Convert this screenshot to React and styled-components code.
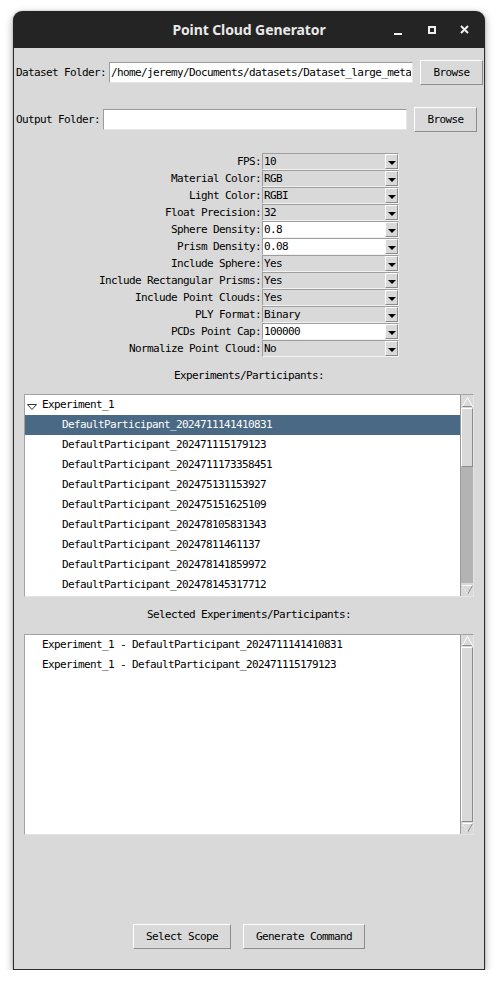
import React from "react";
import styled, { createGlobalStyle } from "styled-components";

const MONO = `"DejaVu Sans Mono", "Liberation Mono", monospace`;

const GlobalStyle = createGlobalStyle`
  html, body { margin: 0; padding: 0; background: #ffffff; }
  body { font-family: ${MONO}; }
  * { box-sizing: border-box; }
`;

const Window = styled.div`
  margin: 11px 0 0 13px;
  width: 472px;
  display: flex;
  flex-direction: column;
  border-radius: 9px 9px 0 0;
  overflow: hidden;
  box-shadow: 0 3px 9px rgba(0, 0, 0, 0.35), 0 0 2px rgba(0, 0, 0, 0.25);
`;

const TitleBar = styled.div`
  height: 37px;
  background: #242424;
  display: grid;
  grid-template-columns: 1fr auto 1fr;
  align-items: center;
`;

const Title = styled.div`
  grid-column: 2;
  font-family: "Noto Sans", "Open Sans", sans-serif;
  font-weight: 700;
  font-size: 14px;
  color: #e9e9e9;
  letter-spacing: -0.1px;
`;

const Controls = styled.div`
  grid-column: 3;
  justify-self: end;
  display: flex;
  padding-right: 4px;
`;

const Control = styled.div`
  width: 33px;
  height: 37px;
  display: flex;
  align-items: center;
  justify-content: center;
  color: #f0f0f0;
`;

const Content = styled.div`
  height: 922px;
  background: #d9d9d9;
  border: 1px solid #2c2c2c;
  border-top: none;
  display: flex;
  flex-direction: column;
  font-family: ${MONO};
  font-size: 11px;
  letter-spacing: -0.62px;
  color: #000;
`;

const FolderRow = styled.div`
  display: flex;
  align-items: center;
  height: 25px;
  padding-left: 2px;
  margin-top: ${(p) => p.$top}px;
`;

const Label = styled.span`
  white-space: nowrap;
`;

const Entry = styled.input`
  margin-left: 3px;
  width: 304px;
  height: 21px;
  padding: 0 1px;
  background: #ffffff;
  border: 1px solid;
  border-color: #9c9c9c #e6e6e6 #e6e6e6 #9c9c9c;
  font: inherit;
  letter-spacing: inherit;
  color: #000;
  outline: none;
`;

const TkButton = styled.button`
  height: 25px;
  width: ${(p) => p.$w}px;
  margin-left: ${(p) => p.$ml || 0}px;
  padding: 0;
  background: #d9d9d9;
  border: 1px solid;
  border-color: #ffffff #8c8c8c #8c8c8c #ffffff;
  font: inherit;
  letter-spacing: inherit;
  color: #000;
  cursor: default;
`;

const ComboGrid = styled.div`
  margin-top: 21px;
  display: grid;
  grid-template-columns: auto 137px;
  grid-auto-rows: 17px;
  justify-content: center;
  align-items: center;
`;

const ComboLabel = styled.span`
  text-align: right;
  white-space: nowrap;
  padding-right: 1px;
`;

const Combo = styled.div`
  height: 17px;
  display: flex;
  border: 1px solid;
  border-color: #9e9e9e #f2f2f2 #f2f2f2 #9e9e9e;
  background: ${(p) => (p.$editable ? "#ffffff" : "#d9d9d9")};
`;

const ComboText = styled.span`
  flex: 1;
  padding-left: 1px;
  line-height: 15px;
  white-space: nowrap;
`;

const ComboArrow = styled.div`
  width: 13px;
  height: 15px;
  background: #d9d9d9;
  border: 1px solid;
  border-color: #ffffff #8c8c8c #8c8c8c #ffffff;
  display: flex;
  align-items: flex-end;
  justify-content: center;
  padding-bottom: 2px;
`;

const SectionLabel = styled.div`
  height: 20px;
  line-height: 20px;
  text-align: center;
  margin-top: ${(p) => p.$top}px;
`;

const ListFrame = styled.div`
  margin: ${(p) => p.$top}px 10px 0 10px;
  height: ${(p) => p.$h}px;
  background: #ffffff;
  border: 1px solid;
  border-color: #a2a2a2 #e4e4e4 #e4e4e4 #a2a2a2;
  display: flex;
`;

const Rows = styled.div`
  flex: 1;
  display: flex;
  flex-direction: column;
  overflow: hidden;
`;

const Row = styled.div`
  height: 20px;
  line-height: 20px;
  flex: none;
  display: flex;
  align-items: center;
  padding-left: ${(p) => p.$indent}px;
  white-space: nowrap;
  background: ${(p) => (p.$selected ? "#4a6984" : "transparent")};
  color: ${(p) => (p.$selected ? "#ffffff" : "#000000")};
`;

const Toggle = styled.span`
  width: 15px;
  margin-left: -15px;
  display: inline-flex;
  align-items: center;
  padding-top: 4px;
`;

const Scrollbar = styled.div`
  width: 13px;
  display: flex;
  flex-direction: column;
  background: #b3b3b3;
  border-left: 1px solid #9a9a9a;
`;

const ScrollArrow = styled.div`
  height: ${(p) => p.$h}px;
  flex: none;
  background: #d9d9d9;
  display: flex;
  align-items: center;
  justify-content: center;
`;

const Thumb = styled.div`
  flex: ${(p) => (p.$fill ? "1" : "none")};
  height: ${(p) => (p.$fill ? "auto" : `${p.$h}px`)};
  background: #d9d9d9;
  border: 1px solid;
  border-color: #ffffff #8c8c8c #8c8c8c #ffffff;
`;

const Trough = styled.div`
  flex: 1;
`;

const ButtonBar = styled.div`
  margin-top: auto;
  padding-bottom: 20px;
  display: flex;
  justify-content: center;
  gap: 12px;
`;

const DownTri = () => (
  <svg width="8" height="5" viewBox="0 0 8 5">
    <path d="M0 0 H8 L4 4 Z" fill="#000" />
    <rect x="0" y="4" width="8" height="1" fill="#000" opacity="0" />
  </svg>
);

const TreeToggle = () => (
  <svg width="10" height="6" viewBox="0 0 10 6">
    <path d="M0.5 0.5 H9.5 L5 5.5 Z" fill="none" stroke="#333" strokeWidth="1" />
  </svg>
);

const ArrowUp = () => (
  <svg width="11" height="10" viewBox="0 0 11 10">
    <path d="M5.5 0.5 L10.5 9.5 H0.5 Z" fill="#d9d9d9" stroke="#ffffff" strokeWidth="1" />
    <path d="M5.5 0.5 L10.5 9.5 H0.5" fill="none" stroke="#8c8c8c" strokeWidth="1" strokeDasharray="0 11 30" />
  </svg>
);

const ArrowDown = () => (
  <svg width="11" height="10" viewBox="0 0 11 10">
    <path d="M0.5 0.5 H10.5 L5.5 9.5 Z" fill="#d9d9d9" stroke="#8c8c8c" strokeWidth="1" />
    <path d="M0.5 0.5 H10.5 M0.5 0.5 L5.5 9.5" fill="none" stroke="#ffffff" strokeWidth="1" />
  </svg>
);

const combos = [
  ["FPS:", "10", false],
  ["Material Color:", "RGB", false],
  ["Light Color:", "RGBI", false],
  ["Float Precision:", "32", false],
  ["Sphere Density:", "0.8", true],
  ["Prism Density:", "0.08", true],
  ["Include Sphere:", "Yes", false],
  ["Include Rectangular Prisms:", "Yes", false],
  ["Include Point Clouds:", "Yes", false],
  ["PLY Format:", "Binary", false],
  ["PCDs Point Cap:", "100000", true],
  ["Normalize Point Cloud:", "No", false],
];

const participants = [
  "DefaultParticipant_2024711141410831",
  "DefaultParticipant_202471115179123",
  "DefaultParticipant_2024711173358451",
  "DefaultParticipant_202475131153927",
  "DefaultParticipant_202475151625109",
  "DefaultParticipant_202478105831343",
  "DefaultParticipant_20247811461137",
  "DefaultParticipant_202478141859972",
  "DefaultParticipant_202478145317712",
];

const selected = [
  "Experiment_1 - DefaultParticipant_2024711141410831",
  "Experiment_1 - DefaultParticipant_202471115179123",
];

export default function App() {
  return (
    <>
      <GlobalStyle />
      <Window>
        <TitleBar>
          <Title>Point Cloud Generator</Title>
          <Controls>
            <Control>
              <svg width="9" height="12" viewBox="0 0 9 12">
                <rect x="0" y="9" width="8" height="2" fill="currentColor" />
              </svg>
            </Control>
            <Control>
              <svg width="8" height="8" viewBox="0 0 8 8">
                <rect x="1" y="1" width="6" height="6" fill="none" stroke="currentColor" strokeWidth="2" />
              </svg>
            </Control>
            <Control>
              <svg width="9" height="9" viewBox="0 0 9 9">
                <path d="M1 1 L8 8 M8 1 L1 8" stroke="currentColor" strokeWidth="2" />
              </svg>
            </Control>
          </Controls>
        </TitleBar>
        <Content>
          <FolderRow $top={12}>
            <Label>Dataset Folder:</Label>
            <Entry readOnly defaultValue="/home/jeremy/Documents/datasets/Dataset_large_metadata" />
            <TkButton $w={63} $ml={7}>Browse</TkButton>
          </FolderRow>
          <FolderRow $top={22}>
            <Label>Output Folder:</Label>
            <Entry readOnly defaultValue="" />
            <TkButton $w={63} $ml={7}>Browse</TkButton>
          </FolderRow>

          <ComboGrid>
            {combos.map(([label, value, editable]) => (
              <React.Fragment key={label}>
                <ComboLabel>{label}</ComboLabel>
                <Combo $editable={editable}>
                  <ComboText>{value}</ComboText>
                  <ComboArrow>
                    <DownTri />
                  </ComboArrow>
                </Combo>
              </React.Fragment>
            ))}
          </ComboGrid>

          <SectionLabel $top={9}>Experiments/Participants:</SectionLabel>
          <ListFrame $top={8} $h={203}>
            <Rows>
              <Row $indent={17}>
                <Toggle>
                  <TreeToggle />
                </Toggle>
                Experiment_1
              </Row>
              {participants.map((p, i) => (
                <Row key={p} $indent={37} $selected={i === 0}>
                  {p}
                </Row>
              ))}
            </Rows>
            <Scrollbar>
              <ScrollArrow $h={13}>
                <ArrowUp />
              </ScrollArrow>
              <Thumb $h={59} />
              <Trough />
              <ScrollArrow $h={13}>
                <ArrowDown />
              </ScrollArrow>
            </Scrollbar>
          </ListFrame>

          <SectionLabel $top={8}>Selected Experiments/Participants:</SectionLabel>
          <ListFrame $top={9} $h={201}>
            <Rows>
              {selected.map((s) => (
                <Row key={s} $indent={17}>
                  {s}
                </Row>
              ))}
            </Rows>
            <Scrollbar>
              <ScrollArrow $h={12}>
                <ArrowUp />
              </ScrollArrow>
              <Thumb $fill />
              <ScrollArrow $h={12}>
                <ArrowDown />
              </ScrollArrow>
            </Scrollbar>
          </ListFrame>

          <ButtonBar>
            <TkButton $w={98}>Select Scope</TkButton>
            <TkButton $w={122}>Generate Command</TkButton>
          </ButtonBar>
        </Content>
      </Window>
    </>
  );
}
